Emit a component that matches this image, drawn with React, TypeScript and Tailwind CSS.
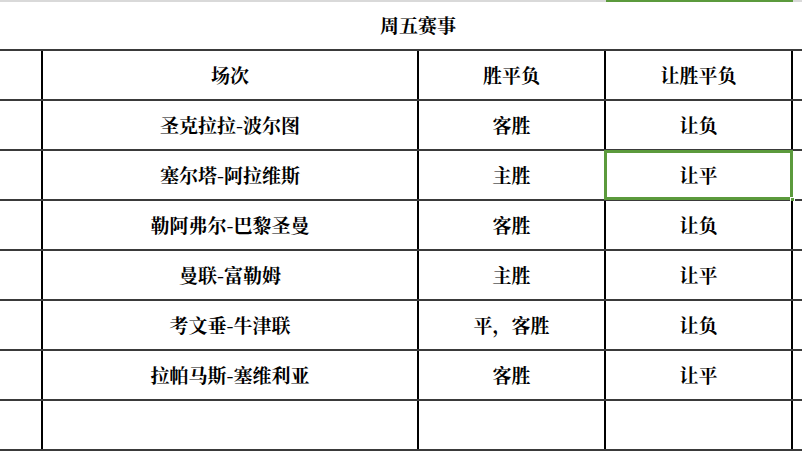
import React from "react";

const rows: [string, string, string][] = [
  ["圣克拉拉-波尔图", "客胜", "让负"],
  ["塞尔塔-阿拉维斯", "主胜", "让平"],
  ["勒阿弗尔-巴黎圣曼", "客胜", "让负"],
  ["曼联-富勒姆", "主胜", "让平"],
  ["考文垂-牛津联", "平，客胜", "让负"],
  ["拉帕马斯-塞维利亚", "客胜", "让平"],
  ["", "", ""],
];

const font = {
  fontFamily: '"Noto Serif CJK SC", "Noto Sans CJK SC", serif',
};

function Row({ cells, selected }: { cells: [string, string, string]; selected?: boolean }) {
  return (
    <div className="flex h-[50px] border-b-2 border-[#3a3a3a]">
      <div className="w-[43px] shrink-0 border-r-2 border-black" />
      <div className="w-[376px] shrink-0 border-r-2 border-black flex items-center justify-center text-[19px] text-black">
        {cells[0]}
      </div>
      <div className="w-[187px] shrink-0 border-r-2 border-black flex items-center justify-center text-[19px] text-black">
        {cells[1]}
      </div>
      <div className="relative w-[187px] shrink-0 border-r-2 border-black flex items-center justify-center text-[19px] text-black">
        {cells[2]}
        {selected && (
          <>
            <div className="absolute left-[-2px] top-[-1px] right-[-2px] bottom-[-1px] border-[3px] border-[#5b9a3c]" />
            <div className="absolute right-[-4px] bottom-[-3px] w-[5px] h-[5px] bg-[#5b9a3c] border border-white" />
          </>
        )}
      </div>
      <div className="flex-1" />
    </div>
  );
}

export default function App() {
  return (
    <div className="w-[802px] h-[452px] overflow-hidden bg-white font-bold" style={font}>
      <div className="flex h-[2px]">
        <div className="w-[606px] bg-[#d9d9d9]" />
        <div className="w-[187px] bg-[#5b9a3c]" />
        <div className="flex-1 bg-[#d9d9d9]" />
      </div>
      <div className="flex h-[49px] border-b-2 border-[#3a3a3a]">
        <div className="w-[43px] shrink-0" />
        <div className="w-[750px] shrink-0 flex items-center justify-center text-[19px] text-black">
          周五赛事
        </div>
      </div>
      <Row cells={["场次", "胜平负", "让胜平负"]} />
      {rows.map((r, i) => (
        <Row key={i} cells={r} selected={i === 1} />
      ))}
    </div>
  );
}
